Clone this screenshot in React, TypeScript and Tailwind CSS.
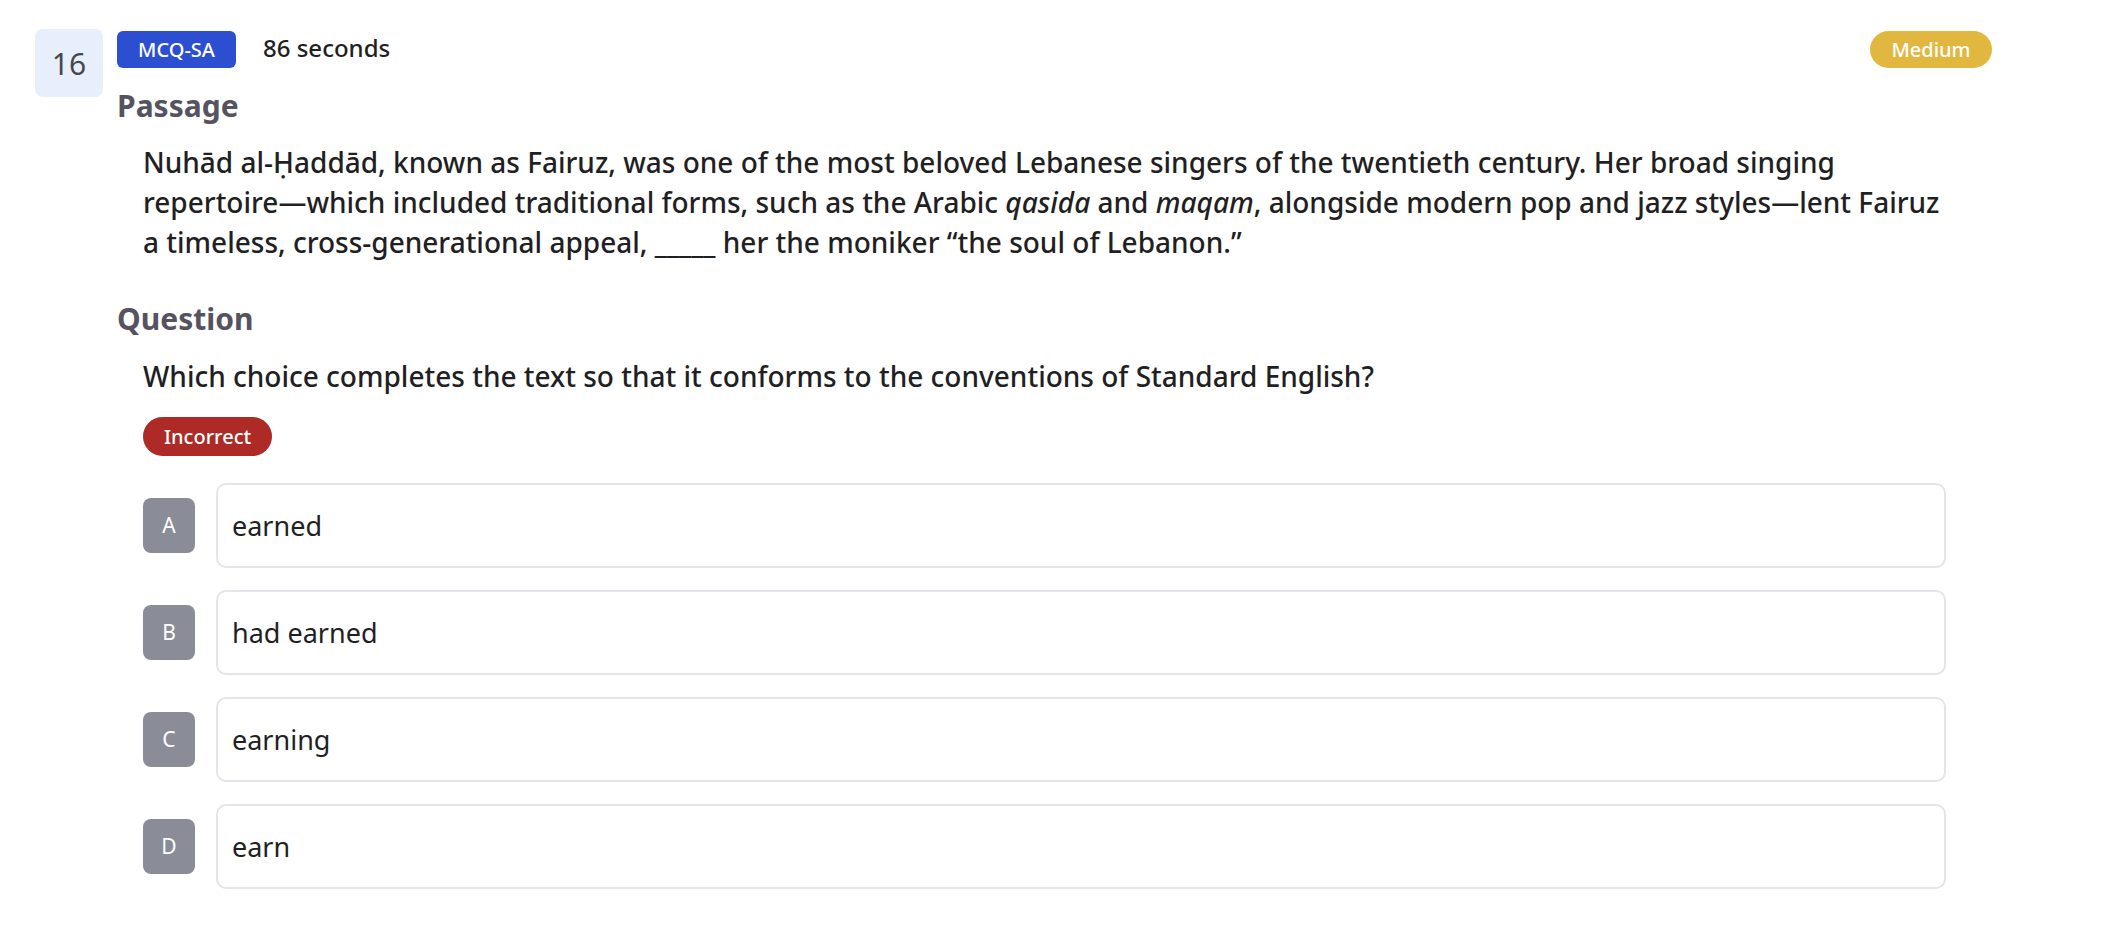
import React from "react";

const options = [
  { letter: "A", text: "earned" },
  { letter: "B", text: "had earned" },
  { letter: "C", text: "earning" },
  { letter: "D", text: "earn" },
];

export default function App() {
  return (
    <div
      className="min-h-screen bg-white text-[#1f1f24]"
      style={{ fontFamily: '"Noto Sans", "Open Sans", sans-serif' }}
    >
      <div className="flex items-start gap-[14px] pl-[35px] pt-[29px]">
        <div className="flex h-[68px] w-[68px] shrink-0 items-center justify-center rounded-[8px] bg-[#e8effc] text-[30px] text-[#46464f]">
          16
        </div>
        <div className="flex w-[1875px] flex-col">
          <div className="flex items-start">
            <div className="mt-[2px] flex h-[37px] w-[119px] items-center justify-center rounded-[6px] bg-[#2b4fd0] text-[20px] font-medium text-white">
              MCQ-SA
            </div>
            <div className="ml-[27px] mt-[1px] text-[24px] font-medium leading-[36px] text-[#1f1f24]">
              86 seconds
            </div>
            <div className="ml-auto mt-[2px] flex h-[37px] w-[122px] items-center justify-center rounded-full bg-[#e2b740] text-[20px] font-medium text-white">
              Medium
            </div>
          </div>
          <h2 className="mt-[18px] text-[30px] font-bold leading-[40px] text-[#55535f]">Passage</h2>
          <div className="mt-[16px] pl-[26px] pr-[46px]">
            <p className="text-[28px] font-medium leading-[40px] text-[#1f1f24]">
              Nuhād al-Ḥaddād, known as Fairuz, was one of the most beloved Lebanese singers of the twentieth century. Her broad singing repertoire—which included traditional forms, such as the Arabic <i>qasida</i> and <i>maqam</i>, alongside modern pop and jazz styles—lent Fairuz a timeless, cross-generational appeal, _____ her the moniker “the soul of Lebanon.”
            </p>
          </div>
          <h2 className="mt-[37px] text-[30px] font-bold leading-[40px] text-[#55535f]">Question</h2>
          <div className="mt-[17px] pl-[26px] pr-[46px]">
            <p className="text-[28px] font-medium leading-[40px] text-[#1f1f24]">
              Which choice completes the text so that it conforms to the conventions of Standard English?
            </p>
            <div className="mt-[21px] flex">
              <span className="flex h-[39px] items-center rounded-full bg-[#ad2a26] px-[21px] text-[20px] font-medium text-white">
                Incorrect
              </span>
            </div>
            <div className="mt-[27px] flex flex-col gap-[22px]">
              {options.map((o) => (
                <div key={o.letter} className="flex items-center gap-[21px]">
                  <div className="flex h-[55px] w-[52px] shrink-0 items-center justify-center rounded-[8px] bg-[#8a8d98] text-[21px] text-white">
                    {o.letter}
                  </div>
                  <div className="flex h-[85px] flex-1 items-center rounded-[10px] border-2 border-[#e4e5ea] px-[14px] pt-[2px] text-[27px] text-[#1f1f24]">
                    {o.text}
                  </div>
                </div>
              ))}
            </div>
          </div>
        </div>
      </div>
    </div>
  );
}
